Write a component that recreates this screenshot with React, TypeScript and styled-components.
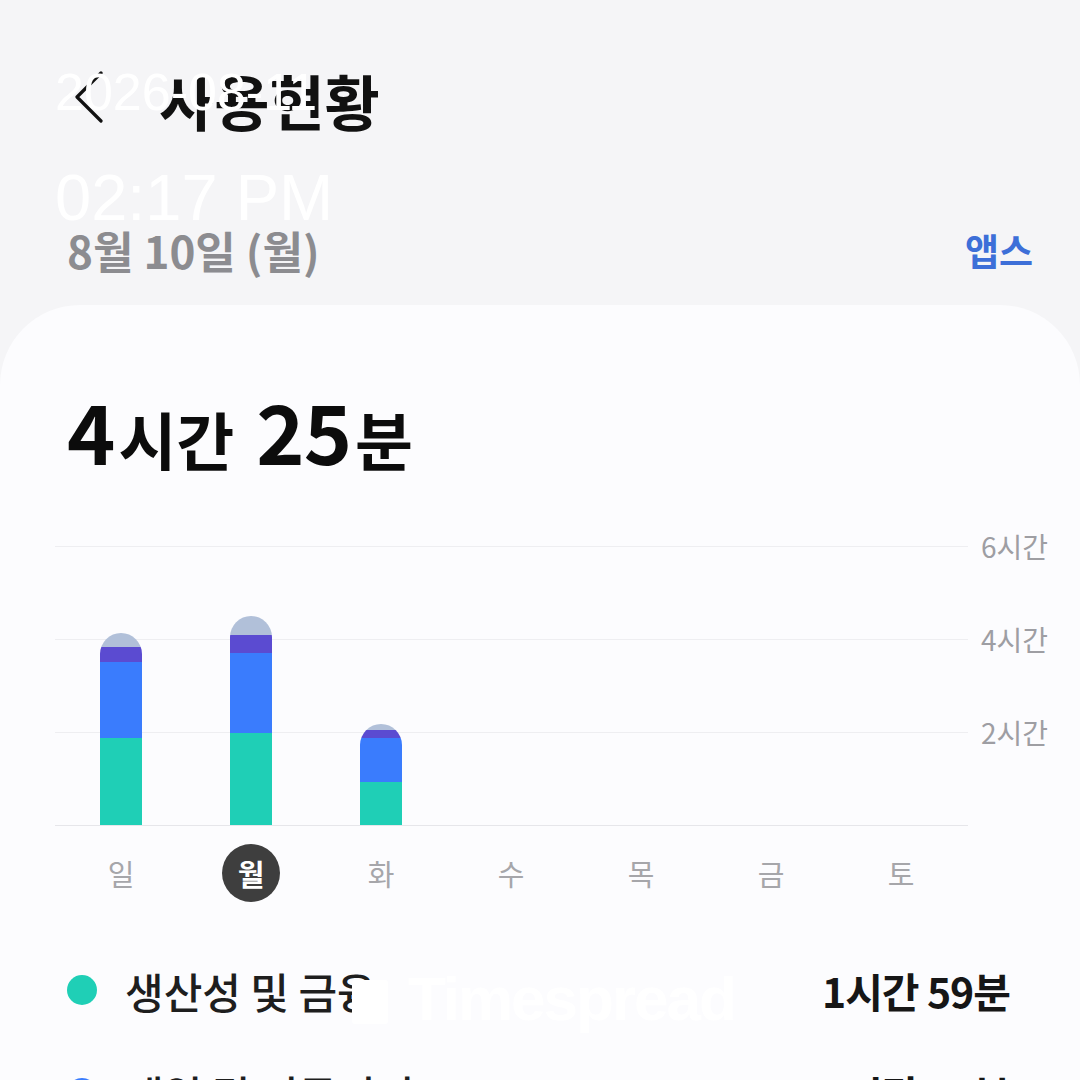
import React from 'react'
import styled, { createGlobalStyle } from 'styled-components'

const GlobalStyle = createGlobalStyle`
  html, body {
    margin: 0;
    padding: 0;
    background: #f5f5f7;
  }
  body {
    font-family: "Noto Sans CJK KR", "Noto Sans", sans-serif;
  }
`

const Screen = styled.div`
  position: relative;
  width: 1080px;
  height: 1080px;
  overflow: hidden;
  background: #f5f5f7;
`

const Header = styled.div`
  height: 200px;
  display: flex;
  align-items: center;
  padding-left: 73px;
`

const BackButton = styled.button`
  width: 32px;
  height: 54px;
  padding: 0;
  border: none;
  background: none;
  display: flex;
  align-items: center;
  justify-content: center;
  margin-top: -6px;
`

const Title = styled.h1`
  margin: 0 0 0 54px;
  font-size: 60px;
  font-weight: 700;
  color: #111;
  line-height: 1;
`

const DateRow = styled.div`
  height: 100px;
  display: flex;
  align-items: center;
  justify-content: space-between;
  padding: 0 47px 0 67px;
`

const DateText = styled.div`
  font-size: 44px;
  font-weight: 600;
  color: #8c8c90;
`

const AppsLink = styled.a`
  font-size: 37px;
  font-weight: 700;
  color: #3d6fd8;
  text-decoration: none;
`

const Card = styled.div`
  margin-top: 5px;
  height: 900px;
  background: #fcfcfe;
  border-radius: 80px 80px 0 0;
  padding-top: 85px;
`

const Total = styled.div`
  padding-left: 67px;
  display: flex;
  align-items: baseline;
  line-height: 80px;
  font-weight: 700;
  color: #0c0c0c;
`

const Num = styled.span`
  font-size: 82px;
  letter-spacing: -1px;
`

const Unit = styled.span<{ $gap?: number }>`
  font-size: 63px;
  margin-left: 4px;
  margin-right: ${p => p.$gap ?? 0}px;
`

const Chart = styled.div`
  display: flex;
  margin-top: 68px;
  padding-left: 55px;
`

const Plot = styled.div`
  width: 913px;
  height: 279px;
  border-bottom: 1px solid #e6e6ea;
  background:
    linear-gradient(#eeeef1, #eeeef1) 0 0 / 100% 1px no-repeat,
    linear-gradient(#eeeef1, #eeeef1) 0 93px / 100% 1px no-repeat,
    linear-gradient(#eeeef1, #eeeef1) 0 186px / 100% 1px no-repeat;
`

const Columns = styled.div`
  height: 100%;
  display: grid;
  grid-template-columns: repeat(7, 130px);
  padding-left: 1px;
`

const Slot = styled.div`
  display: flex;
  justify-content: center;
  align-items: flex-end;
`

const Bar = styled.div`
  width: 42px;
  border-radius: 21px 21px 0 0;
  overflow: hidden;
  display: flex;
  flex-direction: column;
`

const Segment = styled.div<{ $color: string }>`
  background: ${p => p.$color};
`

const Axis = styled.div`
  margin-left: 13px;
  margin-top: -16px;
  display: flex;
  flex-direction: column;
`

const AxisLabel = styled.div`
  height: 93px;
  line-height: 32px;
  font-size: 28px;
  color: #9e9ea3;
`

const Days = styled.div`
  display: grid;
  grid-template-columns: repeat(7, 130px);
  padding-left: 56px;
  margin-top: 18px;
  height: 58px;
`

const Day = styled.div<{ $active?: boolean }>`
  display: flex;
  align-items: center;
  justify-content: center;
  font-size: 29px;
  color: #a6a6aa;

  span {
    width: 58px;
    height: 58px;
    border-radius: 50%;
    display: flex;
    align-items: center;
    justify-content: center;
    background: ${p => (p.$active ? '#3e3e3e' : 'transparent')};
    color: ${p => (p.$active ? '#ffffff' : '#a6a6aa')};
    font-weight: ${p => (p.$active ? 700 : 400)};
  }
`

const Legend = styled.div`
  margin-top: 57px;
  display: flex;
  flex-direction: column;
  gap: 41px;
  padding: 0 70px 0 67px;
`

const LegendRow = styled.div`
  height: 62px;
  display: flex;
  align-items: center;
`

const Dot = styled.span<{ $color: string }>`
  width: 30px;
  height: 30px;
  border-radius: 50%;
  background: ${p => p.$color};
  margin-right: 28px;
`

const LegendName = styled.div`
  flex: 1;
  font-size: 42px;
  font-weight: 500;
  color: #1e1e1e;
`

const LegendValue = styled.div`
  font-size: 41px;
  font-weight: 600;
  color: #161616;
  letter-spacing: -1px;
`

const Stamp = styled.div<{ $size: number; $top: number }>`
  position: absolute;
  left: 55px;
  top: ${p => p.$top}px;
  font-family: "Liberation Sans", Arial, sans-serif;
  font-size: ${p => p.$size}px;
  line-height: 1;
  color: #ffffff;
  white-space: nowrap;
`

const Brand = styled.div`
  position: absolute;
  left: 352px;
  top: 968px;
  display: flex;
  align-items: center;
  gap: 20px;
  color: #ffffff;
  font-family: "Liberation Sans", Arial, sans-serif;
  font-weight: 700;
  font-size: 62px;
  line-height: 1;
  letter-spacing: -2px;
`

const C = {
  teal: '#1fcfb6',
  blue: '#3a7cfd',
  purple: '#5b4bd1',
  gray: '#b1c0d9',
}

// px heights for each stacked segment, top to bottom
const bars = [
  [14, 15, 76, 87],
  [19, 18, 80, 92],
  [6, 8, 44, 43],
  null,
  null,
  null,
  null,
]
const segColors = [C.gray, C.purple, C.blue, C.teal]
const days = ['일', '월', '화', '수', '목', '금', '토']

const App = () => {
  return (
    <Screen>
      <GlobalStyle />
      <Header>
        <BackButton aria-label="뒤로">
          <svg width="30" height="52" viewBox="0 0 30 52" fill="none">
            <path d="M27 2 L3 26 L27 50" stroke="#111" strokeWidth="3.2" strokeLinecap="round" strokeLinejoin="round" />
          </svg>
        </BackButton>
        <Title>사용현황</Title>
      </Header>
      <DateRow>
        <DateText>8월 10일 (월)</DateText>
        <AppsLink>앱스</AppsLink>
      </DateRow>
      <Card>
        <Total>
          <Num>4</Num>
          <Unit $gap={22}>시간</Unit>
          <Num>25</Num>
          <Unit>분</Unit>
        </Total>
        <Chart>
          <Plot>
            <Columns>
              {bars.map((b, i) => (
                <Slot key={i}>
                  {b && (
                    <Bar>
                      {b.map((h, j) => (
                        <Segment key={j} $color={segColors[j]} style={{ height: h }} />
                      ))}
                    </Bar>
                  )}
                </Slot>
              ))}
            </Columns>
          </Plot>
          <Axis>
            <AxisLabel>6시간</AxisLabel>
            <AxisLabel>4시간</AxisLabel>
            <AxisLabel>2시간</AxisLabel>
          </Axis>
        </Chart>
        <Days>
          {days.map((d, i) => (
            <Day key={d} $active={i === 1}>
              <span>{d}</span>
            </Day>
          ))}
        </Days>
        <Legend>
          <LegendRow>
            <Dot $color={C.teal} />
            <LegendName>생산성 및 금융</LegendName>
            <LegendValue>1시간 59분</LegendValue>
          </LegendRow>
          <LegendRow>
            <Dot $color={C.blue} />
            <LegendName>게임 및 커뮤니티</LegendName>
            <LegendValue>1시간 40분</LegendValue>
          </LegendRow>
        </Legend>
      </Card>
      <Stamp $size={52} $top={66}>2026-08-11</Stamp>
      <Stamp $size={65} $top={165}>02:17 PM</Stamp>
      <Brand>
        <svg width="36" height="50" viewBox="0 0 36 50">
          <rect x="0" y="6" width="36" height="44" rx="3" fill="#ffffff" />
        </svg>
        <span>Timespread</span>
      </Brand>
    </Screen>
  )
}

export default App
